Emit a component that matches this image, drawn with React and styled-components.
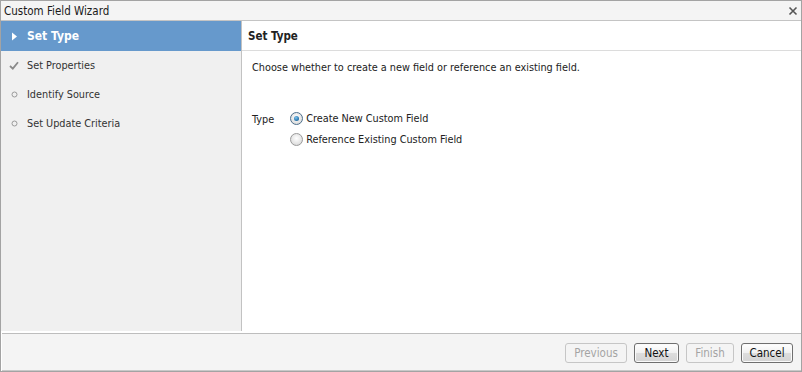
import React from "react";
import styled, { createGlobalStyle } from "styled-components";

const Global = createGlobalStyle`
  html, body { margin: 0; padding: 0; background: #fff; }
  body { font-family: "DejaVu Sans Condensed", "DejaVu Sans", sans-serif; font-size: 10.8px; color: #222; }
`;

const Window = styled.div`
  width: 802px;
  height: 372px;
  box-sizing: border-box;
  border: 1px solid #a3a3a3;
  display: flex;
  flex-direction: column;
  background: #fff;
`;

const TitleBar = styled.div`
  height: 19px;
  flex: none;
  display: flex;
  align-items: center;
  justify-content: space-between;
  padding: 0 3px 0 3px;
  background: #f4f4f4;
  border-bottom: 1px solid #c4c4c4;
  font-size: 11.5px;
  color: #1a1a1a;
`;

const Close = styled.span`
  display: flex;
  width: 10px;
  height: 10px;
`;

const Body = styled.div`
  flex: 1;
  display: flex;
  padding-bottom: 2px;
  min-height: 0;
`;

const Sidebar = styled.div`
  width: 240px;
  flex: none;
  background: #f0f0f0;
  border-right: 1px solid #c2c2c2;
  display: flex;
  flex-direction: column;
`;

const Step = styled.div`
  height: ${(p) => (p.$active ? 30 : 29)}px;
  flex: none;
  display: flex;
  align-items: center;
  padding-left: 8px;
  gap: 8px;
  background: ${(p) => (p.$active ? "#6699cc" : "transparent")};
  color: ${(p) => (p.$active ? "#fff" : "#333")};
  font-weight: ${(p) => (p.$active ? "bold" : "normal")};
  font-size: ${(p) => (p.$active ? "12px" : "10.8px")};
`;

const StepIcon = styled.span`
  width: 10px;
  height: 10px;
  display: flex;
  align-items: center;
  justify-content: center;
`;

const Main = styled.div`
  flex: 1;
  display: flex;
  flex-direction: column;
`;

const Header = styled.div`
  height: 29px;
  flex: none;
  display: flex;
  align-items: center;
  padding-left: 6px;
  border-bottom: 1px solid #dcdcdc;
  font-weight: bold;
  font-size: 11.5px;
  color: #222;
`;

const Content = styled.div`
  padding: 10px 10px;
  display: flex;
  flex-direction: column;
`;

const Intro = styled.div`
  color: #222;
`;

const FieldRow = styled.div`
  margin-top: 38px;
  display: flex;
  gap: 16px;
`;

const Label = styled.div`
  padding-top: 1px;
`;

const Options = styled.div`
  display: flex;
  flex-direction: column;
  gap: 8px;
`;

const Option = styled.label`
  display: flex;
  align-items: center;
  gap: 3px;
`;

const Radio = styled.span`
  width: 11px;
  height: 11px;
  border-radius: 50%;
  border: 1px solid ${(p) => (p.$checked ? "#4d6f8c" : "#9a9a9a")};
  background: radial-gradient(circle at 50% 40%, #ffffff 0%, #e4e4e4 60%, #cfcfcf 100%);
  display: flex;
  align-items: center;
  justify-content: center;
  &::after {
    content: "";
    display: ${(p) => (p.$checked ? "block" : "none")};
    width: 5px;
    height: 5px;
    border-radius: 50%;
    background: radial-gradient(circle at 40% 35%, #7fc3ee 0%, #1f6fa8 70%, #174f7a 100%);
  }
`;

const Footer = styled.div`
  height: 38px;
  box-sizing: border-box;
  flex: none;
  margin: 0 0 0 1px;
  border-top: 1px solid #bdbdbd;
  border-bottom: 1px solid #c8c8c8;
  background: #f4f4f4;
  display: flex;
  align-items: center;
  justify-content: flex-end;
  gap: 7px;
  padding-right: 8px;
  padding-top: 1px;
`;

const Button = styled.button`
  height: 20px;
  min-width: ${(p) => p.$w}px;
  padding: 0 6px;
  font-family: inherit;
  font-size: 11.5px;
  border-radius: 3px;
  border: 1px solid ${(p) => (p.disabled ? "#c6c6c6" : "#6f6f6f")};
  color: ${(p) => (p.disabled ? "#a4a4a4" : "#111")};
  background: ${(p) =>
    p.disabled
      ? "#f4f4f4"
      : "linear-gradient(#ffffff 0%, #f0f0f0 50%, #dddddd 51%, #d4d4d4 100%)"};
  box-shadow: ${(p) => (p.disabled ? "none" : "inset 0 0 0 1px #fafafa")};
`;

const Arrow = () => (
  <svg width="7" height="9" viewBox="0 0 7 9">
    <path d="M1 0.5 L6 4.5 L1 8.5 Z" fill="#fff" />
  </svg>
);

const Check = () => (
  <svg width="10" height="9" viewBox="0 0 10 9">
    <path d="M1 5 L3.8 7.6 L9 1.2" fill="none" stroke="#8a8a8a" strokeWidth="1.8" />
  </svg>
);

const Dot = () => (
  <svg width="7" height="7" viewBox="0 0 7 7">
    <circle cx="3.5" cy="3.5" r="2.5" fill="none" stroke="#9a9a9a" strokeWidth="1" />
  </svg>
);

const steps = [
  { label: "Set Type", state: "active" },
  { label: "Set Properties", state: "done" },
  { label: "Identify Source", state: "todo" },
  { label: "Set Update Criteria", state: "todo" },
];

export default function App() {
  return (
    <>
      <Global />
      <Window>
        <TitleBar>
          <span>Custom Field Wizard</span>
          <Close>
            <svg width="10" height="10" viewBox="0 0 10 10">
              <path d="M1.5 1.5 L8.5 8.5 M8.5 1.5 L1.5 8.5" stroke="#555" strokeWidth="1.6" />
            </svg>
          </Close>
        </TitleBar>
        <Body>
          <Sidebar>
            {steps.map((s) => (
              <Step key={s.label} $active={s.state === "active"}>
                <StepIcon>
                  {s.state === "active" ? <Arrow /> : s.state === "done" ? <Check /> : <Dot />}
                </StepIcon>
                {s.label}
              </Step>
            ))}
          </Sidebar>
          <Main>
            <Header>Set Type</Header>
            <Content>
              <Intro>Choose whether to create a new field or reference an existing field.</Intro>
              <FieldRow>
                <Label>Type</Label>
                <Options>
                  <Option>
                    <Radio $checked />
                    Create New Custom Field
                  </Option>
                  <Option>
                    <Radio />
                    Reference Existing Custom Field
                  </Option>
                </Options>
              </FieldRow>
            </Content>
          </Main>
        </Body>
        <Footer>
          <Button disabled $w={62}>Previous</Button>
          <Button $w={45}>Next</Button>
          <Button disabled $w={48}>Finish</Button>
          <Button $w={52}>Cancel</Button>
        </Footer>
      </Window>
    </>
  );
}
